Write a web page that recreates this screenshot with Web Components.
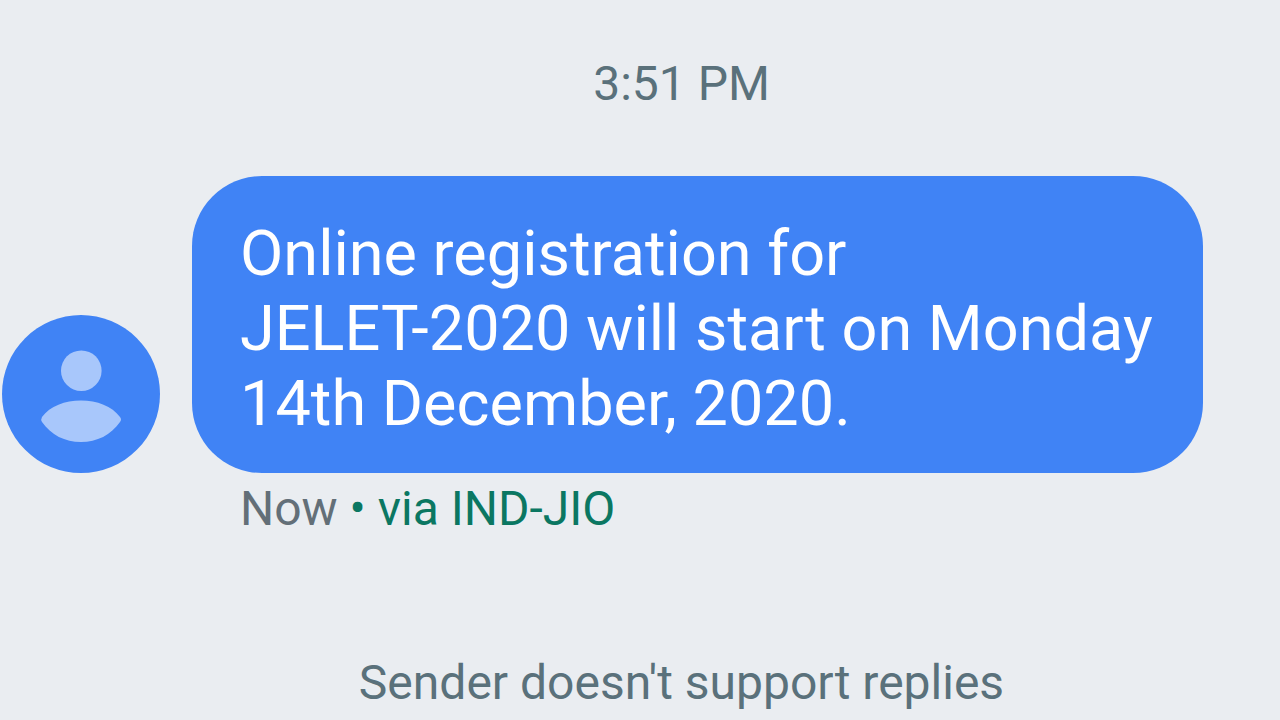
<!DOCTYPE html>
<html lang="en">
<head>
<meta charset="utf-8">
<title>Messages</title>
<style>
body { margin: 0; background: #eaedf1; font-family: Roboto, sans-serif; }
</style>
</head>
<body>
<message-thread>
  <thread-note slot="time">3:51 PM</thread-note>
  <message-row>
    <sender-avatar slot="avatar"></sender-avatar>
    <message-bubble>Online registration for<br>JELET-2020 will start on Monday<br>14th December, 2020.</message-bubble>
    <message-meta slot="meta">Now<span slot="via">via IND-JIO</span></message-meta>
  </message-row>
  <thread-note slot="footer">Sender doesn't support replies</thread-note>
</message-thread>
<script>
class BaseElement extends HTMLElement {
  constructor() {
    super();
    this.attachShadow({ mode: 'open' }).innerHTML = this.constructor.markup;
  }
}

class MessageThread extends BaseElement {
  static markup = `
    <style>
      :host { display: block; padding-top: 56px; }
      main { display: flex; flex-direction: column; }
      .time, .footer { padding-left: 83px; }
      .body { padding-top: 64px; }
      .footer { padding-top: 118px; }
    </style>
    <main>
      <div class="time"><slot name="time"></slot></div>
      <div class="body"><slot></slot></div>
      <div class="footer"><slot name="footer"></slot></div>
    </main>`;
}
customElements.define('message-thread', MessageThread);

class ThreadNote extends BaseElement {
  static markup = `
    <style>
      :host { display: block; text-align: center; color: #5a717b; font-size: 48px; line-height: 56px; }
      p { margin: 0; }
    </style>
    <p><slot></slot></p>`;
}
customElements.define('thread-note', ThreadNote);

class MessageRow extends BaseElement {
  static markup = `
    <style>
      :host { display: grid; grid-template-columns: 160px minmax(0, max-content); column-gap: 32px; align-items: end; }
      .meta { grid-column: 2; padding: 8px 48px 0; }
    </style>
    <slot name="avatar"></slot>
    <slot></slot>
    <div class="meta"><slot name="meta"></slot></div>`;
}
customElements.define('message-row', MessageRow);

class SenderAvatar extends BaseElement {
  static markup = `
    <style>
      :host { display: block; }
      svg { display: block; width: 160px; height: 158px; }
    </style>
    <svg viewBox="0 0 160 158" aria-hidden="true">
      <circle cx="81" cy="79" r="79" fill="#4083f5"/>
      <g fill="#a8c7fb">
        <circle cx="81.300" cy="55.700" r="20.300"/>
        <path d="M42 102C50 91 65 85.500 81 85.500S112 91 120 102Q122 104.500 120 107C111 120 97 127 81 127S51 120 42 107Q40.500 104.500 42 102z"/>
      </g>
    </svg>`;
}
customElements.define('sender-avatar', SenderAvatar);

class MessageBubble extends BaseElement {
  static markup = `
    <style>
      :host { display: block; background: #4083f5; color: #fff; border-radius: 70px; padding: 40px 50px 32px 48px; font-size: 63px; line-height: 75px; }
      p { margin: 0; }
    </style>
    <p><slot></slot></p>`;
}
customElements.define('message-bubble', MessageBubble);

class MessageMeta extends BaseElement {
  static markup = `
    <style>
      :host { display: block; color: #636f78; font-size: 48px; line-height: 56px; }
      p { margin: 0; }
      .via { color: #0b7762; }
    </style>
    <p><slot></slot> <span class="via">• <slot name="via"></slot></span></p>`;
}
customElements.define('message-meta', MessageMeta);
</script>
</body>
</html>
